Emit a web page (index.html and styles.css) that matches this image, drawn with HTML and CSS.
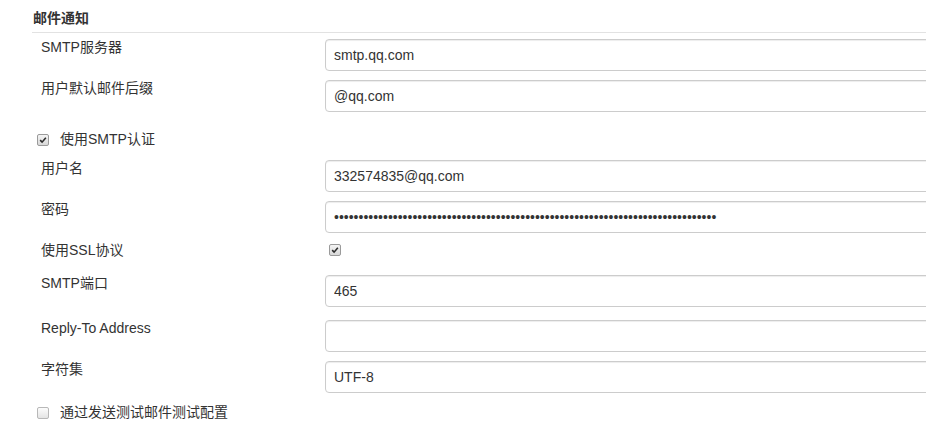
FILE: index.html
```html
<!DOCTYPE html>
<html lang="zh-CN">
<head>
    <meta charset="UTF-8">
    <meta name="viewport" content="width=device-width, initial-scale=1.0">
    <title>邮件通知</title>
    <link rel="stylesheet" href="styles.css">
</head>
<body>
    <div class="section">
        <h2 class="section-title">邮件通知</h2>

        <div class="row">
            <div class="setting-name">SMTP服务器</div>
            <div class="setting-main"><input class="text-field" type="text" value="smtp.qq.com"></div>
        </div>

        <div class="row">
            <div class="setting-name">用户默认邮件后缀</div>
            <div class="setting-main"><input class="text-field" type="text" value="@qq.com"></div>
        </div>

        <div class="check-row check-row-auth">
            <span class="checkbox checked">
                <svg viewBox="0 0 12 12" width="12" height="12"><path d="M2.6 6.2 L4.9 8.6 L9.4 3.2" fill="none" stroke="#2b2b2b" stroke-width="1.9"/></svg>
            </span>
            <span class="check-label">使用SMTP认证</span>
        </div>

        <div class="row">
            <div class="setting-name">用户名</div>
            <div class="setting-main"><input class="text-field" type="text" value="332574835@qq.com"></div>
        </div>

        <div class="row">
            <div class="setting-name">密码</div>
            <div class="setting-main"><input class="text-field password" type="password" value="abcdefghijabcdefghijabcdefghijabcdefghijabcdefghijabcdefghijabcdefghijabcdefgh"></div>
        </div>

        <div class="row row-check">
            <div class="setting-name">使用SSL协议</div>
            <div class="setting-main">
                <span class="checkbox checked inline-check">
                    <svg viewBox="0 0 12 12" width="12" height="12"><path d="M2.6 6.2 L4.9 8.6 L9.4 3.2" fill="none" stroke="#2b2b2b" stroke-width="1.9"/></svg>
                </span>
            </div>
        </div>

        <div class="row row-port">
            <div class="setting-name">SMTP端口</div>
            <div class="setting-main"><input class="text-field" type="text" value="465"></div>
        </div>

        <div class="row">
            <div class="setting-name">Reply-To Address</div>
            <div class="setting-main"><input class="text-field" type="text" value=""></div>
        </div>

        <div class="row">
            <div class="setting-name">字符集</div>
            <div class="setting-main"><input class="text-field" type="text" value="UTF-8"></div>
        </div>

        <div class="check-row check-row-test">
            <span class="checkbox"></span>
            <span class="check-label">通过发送测试邮件测试配置</span>
        </div>
    </div>
</body>
</html>
```

FILE: styles.css
```css
html, body {
    margin: 0;
    padding: 0;
    overflow: hidden;
}

body {
    font-family: 'Liberation Sans', Arial, 'Noto Sans CJK SC', sans-serif;
    font-size: 14px;
    color: #333;
    background: #fff;
}

.section {
    overflow: hidden;
}

.section-title {
    margin: 0 0 0 32px;
    padding: 9px 0 5px 1px;
    font-size: 14px;
    line-height: 18px;
    font-weight: bold;
    color: #333;
    border-bottom: 1px solid #e2e2e2;
}

.row {
    display: flex;
    align-items: flex-start;
    padding-left: 41px;
    margin-bottom: 9px;
}

.section-title + .row {
    margin-top: 6px;
}

.setting-name {
    width: 284px;
    flex-shrink: 0;
    line-height: 17px;
    color: #333;
}

.setting-main {
    flex: 1;
    margin-right: -12px;
}

.text-field {
    display: block;
    width: 100%;
    height: 32px;
    box-sizing: border-box;
    padding: 0 8px;
    margin: 0;
    border: 1px solid #ccc;
    border-radius: 4px;
    box-shadow: inset 0 1px 1px rgba(0,0,0,0.075);
    font-family: 'Liberation Sans', Arial, 'Noto Sans CJK SC', sans-serif;
    font-size: 14px;
    color: #333;
    background: #fff;
    outline: none;
}

.row-check {
    min-height: 24px;
}

.row-port {
    margin-bottom: 13px;
}

.check-row {
    display: flex;
    align-items: center;
    padding-left: 37px;
    line-height: 17px;
}

.check-row-auth {
    padding-top: 10px;
    padding-bottom: 3px;
    margin-bottom: 9px;
}

.check-row-test {
    padding-top: 2px;
}

.check-label {
    margin-left: 11px;
}

.checkbox {
    display: inline-flex;
    align-items: center;
    justify-content: center;
    width: 12px;
    height: 12px;
    box-sizing: border-box;
    border: 1px solid #b8b8b8;
    border-radius: 2px;
    background: linear-gradient(#fcfcfc, #e4e4e4);
}

.checkbox.checked {
    border-color: #9a9a9a;
    background: linear-gradient(#f4f4f4, #d8d8d8);
}

.checkbox svg {
    display: block;
}

.inline-check {
    margin: 2px 0 0 4px;
}
```
